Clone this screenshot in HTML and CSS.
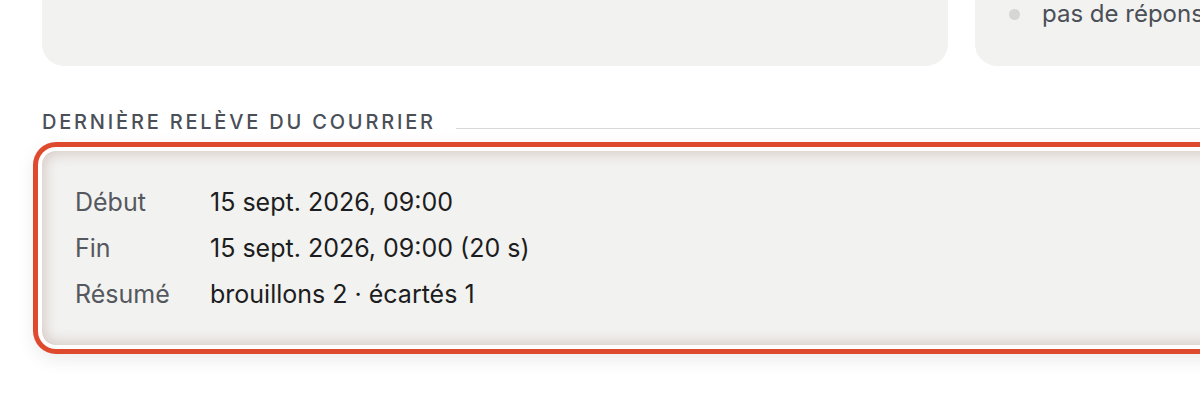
FILE: index.html
```html
<!DOCTYPE html>
<html lang="fr">
<head>
  <meta charset="UTF-8" />
  <meta name="viewport" content="width=device-width, initial-scale=1.0"/>
  <title>Relève du courrier</title>
  <link rel="stylesheet" href="styles.css">
</head>
<body>
  <div class="page">
    <div class="top-row">
      <div class="panel panel-main"></div>
      <div class="panel panel-side">
        <ul class="status-list">
          <li><span class="dot"></span>pas de réponse</li>
        </ul>
      </div>
    </div>

    <div class="section-head">
      <h2>Dernière relève du courrier</h2>
      <span class="rule"></span>
    </div>

    <div class="run-card is-flagged">
      <dl class="run-grid">
        <dt>Début</dt>
        <dd>15 sept. 2026, 09:00</dd>
        <dt>Fin</dt>
        <dd>15 sept. 2026, 09:00 (20 s)</dd>
        <dt>Résumé</dt>
        <dd>brouillons 2 · écartés 1</dd>
      </dl>
    </div>
  </div>
</body>
</html>
```

FILE: styles.css
```css
html {
  overflow: hidden;
}
body {
  margin: 0;
  padding: 0;
  background: #ffffff;
  font-family: Inter, "Noto Sans", sans-serif;
  color: #1c1d20;
}
.page {
  width: 1500px;
  padding: 0 0 60px 42px;
}
.top-row {
  display: flex;
  gap: 27px;
  margin-top: -60px;
}
.panel {
  background: #f2f2f0;
  border-radius: 22px;
  height: 126px;
  box-sizing: border-box;
}
.panel-main {
  width: 906px;
}
.panel-side {
  width: 500px;
  display: flex;
  flex-direction: column;
  justify-content: flex-end;
  padding: 0 0 37px 34px;
}
.status-list {
  list-style: none;
  margin: 0;
  padding: 0;
}
.status-list li {
  display: flex;
  align-items: center;
  gap: 22px;
  font-size: 24px;
  line-height: 30px;
  color: #4b4f57;
}
.dot {
  width: 11px;
  height: 11px;
  border-radius: 50%;
  background: #d6d6d4;
}
.section-head {
  display: flex;
  align-items: flex-end;
  gap: 20px;
  margin-top: 44px;
  width: 1158px;
}
.section-head h2 {
  margin: 0;
  font-size: 20px;
  font-weight: 500;
  letter-spacing: 2.8px;
  text-transform: uppercase;
  color: #4b4f57;
  line-height: 24px;
  white-space: nowrap;
}
.rule {
  flex: 1;
  height: 1px;
  background: #d8d8d8;
  margin-bottom: 5px;
}
.run-card {
  margin-top: 17px;
  width: 1300px;
  background: #f2f2f0;
  border-radius: 14px;
  padding: 35px 33px;
}
.run-card.is-flagged {
  box-shadow:
    0 0 0 4px #ffffff,
    0 0 0 9px #df4a2e,
    0 6px 18px 9px rgba(0, 0, 0, 0.08),
    inset 0 0 14px 2px rgba(140, 90, 80, 0.28);
}
.run-grid {
  display: grid;
  grid-template-columns: 135px 1fr;
  row-gap: 14px;
  margin: 0;
  font-size: 25px;
  line-height: 32px;
}
.run-grid dt {
  color: #55585e;
}
.run-grid dd {
  margin: 0;
  color: #1c1d20;
}
```
